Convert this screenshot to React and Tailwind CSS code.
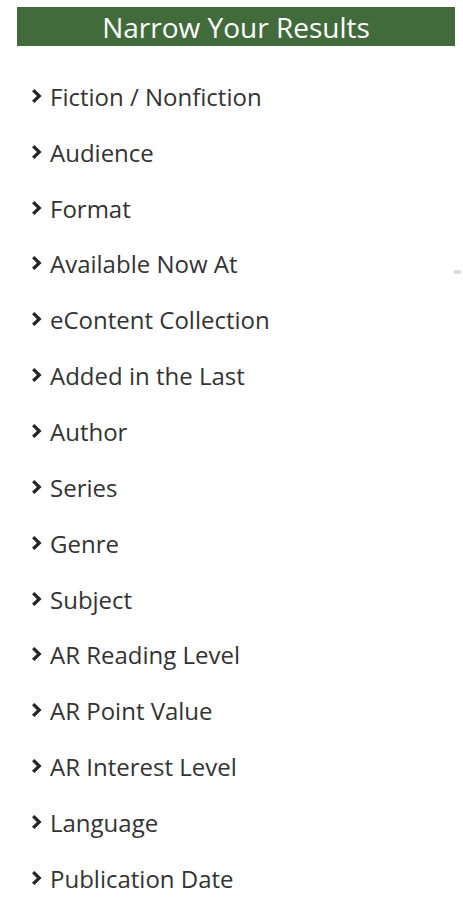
import React from "react";

const items = [
  "Fiction / Nonfiction",
  "Audience",
  "Format",
  "Available Now At",
  "eContent Collection",
  "Added in the Last",
  "Author",
  "Series",
  "Genre",
  "Subject",
  "AR Reading Level",
  "AR Point Value",
  "AR Interest Level",
  "Language",
  "Publication Date",
];

function Chevron() {
  return (
    <svg width="10" height="14" viewBox="0 0 10 14" className="shrink-0 mb-[2px]">
      <polygon points="0,2.3 2.4,0 9.6,7 2.4,14 0,11.7 4.9,7" fill="#262626" />
    </svg>
  );
}

export default function App() {
  return (
    <div
      className="relative w-[463px] h-[909px] bg-white overflow-hidden"
      style={{ fontFamily: '"Open Sans", "Noto Sans", sans-serif' }}
    >
      <div className="pt-[7px] pl-[17px] pr-[8px]">
        <div className="h-[39px] bg-[#426b3c] text-white text-[28px] leading-[40px] text-center">
          Narrow Your Results
        </div>
      </div>
      <ul className="mt-[23px] pl-[32px]">
        {items.map((t) => (
          <li key={t} className="h-[55.85px] flex items-center gap-[8px] text-[24px] text-[#333]">
            <Chevron />
            <span className="leading-none">{t}</span>
          </li>
        ))}
      </ul>
      <div className="absolute left-[454px] top-[270px] w-[7px] h-[4px] bg-[#dcdcdc]" />
    </div>
  );
}
